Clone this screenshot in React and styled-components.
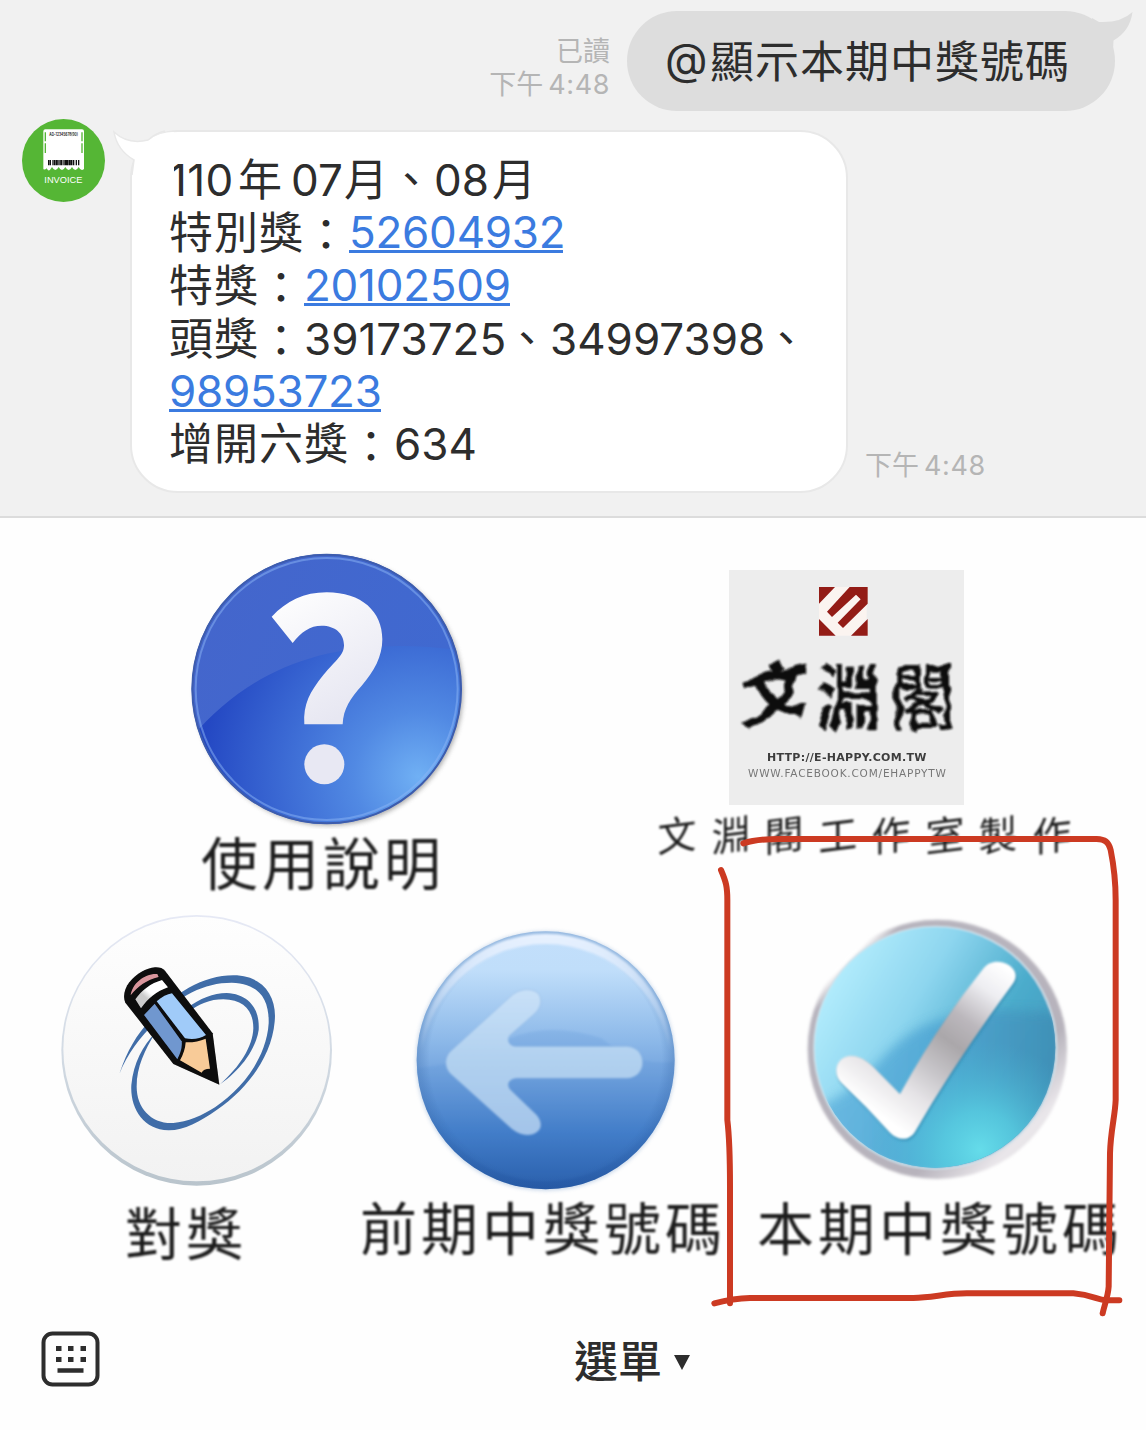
import React from "react";
import styled, { createGlobalStyle } from "styled-components";

const GlobalStyle = createGlobalStyle`
  *, *::before, *::after { box-sizing: border-box; }
  body { margin: 0; background: #fefefe; }
  svg { display: block; flex: none; }
`;

const Screen = styled.main`
  display: flex;
  flex-direction: column;
  width: 1146px;
  height: 1430px;
  overflow: hidden;
  background: #fefefe;
  color: #2d2d2d;
  font-family: Inter, "Noto Sans CJK TC", sans-serif;
`;

const Chat = styled.section`
  display: flex;
  flex-direction: column;
  gap: 8px;
  height: 518px;
  padding-top: 11px;
  background: #f1f1f1;
  border-bottom: 2px solid #dcdcdc;
`;

const SentRow = styled.div`
  display: flex;
  justify-content: flex-end;
  gap: 17px;
  padding-right: 31px;
`;

const ReceivedRow = styled.div`
  display: flex;
  align-items: flex-start;
  padding-left: 22px;
`;

const Meta = styled.div`
  display: flex;
  flex-direction: column;
  align-items: ${(p) => (p.$end ? "flex-end" : "flex-start")};
  padding: ${(p) => p.$top}px 0 0 ${(p) => p.$left || 0}px;
  font-size: 27px;
  line-height: 33px;
  color: #b5b5b5;
  white-space: nowrap;
`;

const Time = styled.span`
  display: flex;
  gap: 5px;
`;

const TimeDigits = styled.span`
  letter-spacing: 0.6px;
`;

const SentBubble = styled.div`
  position: relative;
  display: flex;
  align-items: center;
  width: 488px;
  height: 100px;
  padding-left: 38px;
  padding-bottom: 5px;
  border-radius: 50px;
  background: #dddddd;
  font-size: 44px;
  white-space: nowrap;
`;

const ReceivedBubble = styled.div`
  position: relative;
  width: 718px;
  height: 363px;
  margin: 11px 0 0 25px;
  padding: 22px 0 0 37px;
  border: 2px solid #e8e8e8;
  border-radius: 48px;
  background: #ffffff;
`;

const SentTail = styled.svg`
  position: absolute;
  right: -19px;
  top: 0;
`;

const ReceivedTail = styled.svg`
  position: absolute;
  left: -19px;
  top: -2px;
`;

const Line = styled.div`
  display: flex;
  height: 52.9px;
  align-items: center;
  font-size: 44px;
  line-height: 52.9px;
  white-space: nowrap;
`;

const Run = styled.span`
  flex: none;
  width: ${(p) => p.$w}px;
  letter-spacing: ${(p) => p.$ls || 0}px;
`;

const Colon = styled.span`
  flex: none;
  width: 45px;
  height: 50px;
  line-height: 55px;
`;

const NumberLink = styled.a`
  display: block;
  width: ${(p) => p.$w}px;
  height: 43px;
  margin-top: -3px;
  line-height: 44px;
  letter-spacing: -0.25px;
  color: #3b7be0;
  border-bottom: 3px solid #3b7be0;
`;

const Menu = styled.section`
  position: relative;
  height: 777px;
`;

const TopRow = styled.div`
  display: grid;
  grid-template-columns: 573px 1fr;
  height: 382px;
`;

const BottomRow = styled.div`
  display: grid;
  grid-template-columns: 350px 390px 1fr;
`;

const Tile = styled.div`
  display: flex;
  flex-direction: column;
  align-items: flex-start;
  padding: ${(p) => p.$top}px 0 0 ${(p) => p.$left}px;
`;

const Artwork = styled.div`
  margin-left: ${(p) => p.$shift || 0}px;
`;

const Label = styled.span`
  margin: ${(p) => p.$top}px 0 0 ${(p) => p.$shift || 0}px;
  font-size: 57px;
  line-height: 66px;
  letter-spacing: 4px;
  color: #1c1c1c;
  white-space: nowrap;
  filter: blur(0.8px);
`;

const Credit = styled(Label)`
  display: flex;
  font-size: 40px;
  line-height: 50px;
  letter-spacing: 0;
`;

const CreditGlyph = styled.span`
  width: 53.5px;
  transform: skewY(-7deg) scaleX(0.97);
  transform-origin: 20px 25px;
`;

const Annotation = styled.svg`
  position: absolute;
  left: 700px;
  top: 302px;
  pointer-events: none;
`;

const Footer = styled.footer`
  display: flex;
  align-items: center;
  height: 135px;
  padding: 0 0 7px 41px;
`;

const MenuButton = styled.button`
  display: flex;
  align-items: center;
  gap: 12px;
  margin-left: 474px;
  padding: 0;
  border: 0;
  background: none;
  color: #2d2d2d;
  font: 500 44px/60px "Noto Sans CJK TC", sans-serif;
`;

const Caret = styled.svg`
  margin-top: 6px;
`;

function Avatar() {
  return (
    <svg width="83" height="83" viewBox="66 57 249 249">
      <circle cx="190.500" cy="181.500" r="124.500" fill="#55b635" />
      <path d="M136 88H246Q252 88 252 94V207Q243 215 236 201Q226 219 216 201Q206 219 196 201Q186 219 176 201Q166 219 156 201Q146 219 140 205Q134 211 130 207V94Q130 88 136 88Z" fill="#fff" />
      <path d="M136 97V124M136 130V159M246 97V124M246 130V159" stroke="#55b635" strokeWidth="4" />
      <path d="M146 180V196M151 180V196M159 180V196M164 180V196M177 180V196M192 180V196M203 180V196M208 180V196M221 180V196M229 180V196M236 180V196" stroke="#111" strokeWidth="4" />
      <path d="M170 180V196M184 180V196M198 180V196M214 180V196" stroke="#111" strokeWidth="7" />
      <text x="148" y="107" textLength="86" lengthAdjust="spacingAndGlyphs" fontSize="14" fontWeight="600" fill="#111">AD-12345678(90)</text>
      <text x="133" y="248" textLength="114" lengthAdjust="spacingAndGlyphs" fontFamily="Liberation Sans" fontSize="29" fill="#fff">INVOICE</text>
    </svg>
  );
}

function QuestionIcon() {
  return (
    <svg width="290" height="283" viewBox="30 18 870 849">
      <defs>
        <radialGradient id="qBase" gradientUnits="userSpaceOnUse" cx="745" cy="710" r="650">
          <stop offset="0" stopColor="#70b0f4" />
          <stop offset=".3" stopColor="#5189e3" />
          <stop offset=".65" stopColor="#3a68d3" />
          <stop offset="1" stopColor="#2448c3" />
        </radialGradient>
        <linearGradient id="qMark" x1="0" y1="0" x2=".5" y2="1">
          <stop offset="0" stopColor="#fff" />
          <stop offset="1" stopColor="#e7e7f2" />
        </linearGradient>
        <linearGradient id="qGloss" x1="0" y1="0" x2="1" y2=".3">
          <stop offset="0" stopColor="#4565cb" />
          <stop offset="1" stopColor="#4069d0" />
        </linearGradient>
        <clipPath id="qClip"><circle cx="470" cy="447" r="403" /></clipPath>
        <filter id="qShadow" x="-10%" y="-10%" width="120%" height="120%"><feGaussianBlur stdDeviation="8" /></filter>
        <filter id="qSoft"><feGaussianBlur stdDeviation="2.200" /></filter>
      </defs>
      <circle cx="477" cy="454" r="402" fill="#777" opacity=".65" filter="url(#qShadow)" />
      <circle cx="470" cy="447" r="405" fill="url(#qBase)" />
      <path clipPath="url(#qClip)" d="M50 610C220 400 470 270 900 335V0H0Z" fill="url(#qGloss)" />
      <g filter="url(#qSoft)">
        <circle cx="470" cy="447" r="393" fill="none" stroke="#8bb5f5" strokeWidth="6" opacity=".5" />
        <circle cx="470" cy="447" r="403" fill="none" stroke="#3c5cad" strokeWidth="6" />
        <path d="M305 230C350 183 402 157 470 157C575 157 637 215 637 298C637 350 612 395 575 437C542 474 520 505 518 553H403C399 492 420 455 460 405C500 358 522 345 522 315C522 280 495 257 455 257C420 257 395 275 368 309Z" fill="url(#qMark)" />
        <circle cx="463" cy="673" r="60" fill="#e8e8f3" />
      </g>
    </svg>
  );
}

function StudioLogo() {
  return (
    <svg width="235" height="235" viewBox="0 0 235 235">
      <defs>
        <filter id="brush" x="-10%" y="-10%" width="120%" height="120%">
          <feTurbulence type="fractalNoise" baseFrequency="0.045 0.06" numOctaves="2" seed="8" result="n" />
          <feDisplacementMap in="SourceGraphic" in2="n" scale="11" xChannelSelector="R" yChannelSelector="G" />
          <feGaussianBlur stdDeviation=".8" />
        </filter>
        <filter id="soft"><feGaussianBlur stdDeviation=".5" /></filter>
      </defs>
      <rect width="235" height="235" fill="#ededed" />
      <g transform="translate(90 17) scale(.3333)" filter="url(#soft)">
        <path d="M48 0H92L143 48V95L96 146H50L0 96V50Z" fill="#fbf4f0" />
        <path d="M0 0H48L0 50ZM0 96L50 146H0ZM146 96V146H96Z" fill="#931b18" />
        <path d="M92 0H146V50L72 123L56 107L125 37L111 23L39 90L24 74Z" fill="#931b18" />
      </g>
      <g filter="url(#brush)" fill="#0b0b0b" fontFamily="Noto Sans CJK TC" fontSize="70">
        <text transform="translate(12 156) skewY(-14) scale(.98 .95)" x="0" y="0" fontWeight="900">文</text>
        <text transform="translate(87 154) scale(.92 1.02)" x="0" y="0" fontWeight="700">淵</text>
        <text transform="translate(161 154) scale(.93 1.02)" x="0" y="0" fontWeight="500">閣</text>
      </g>
      <g filter="url(#soft)" fontFamily="DejaVu Sans">
        <text x="38" y="191" fontSize="11" fontWeight="700" fill="#3e3e3e" letterSpacing=".3">HTTP://E-HAPPY.COM.TW</text>
        <text x="19" y="207" fontSize="10.500" fill="#777" letterSpacing=".8">WWW.FACEBOOK.COM/EHAPPYTW</text>
      </g>
    </svg>
  );
}

function PencilIcon() {
  return (
    <svg width="283" height="283" viewBox="45 33 849 849">
      <defs>
        <linearGradient id="pBase" x1="0" y1="0" x2="0" y2="1">
          <stop offset="0" stopColor="#fefefe" />
          <stop offset="1" stopColor="#f2f2f2" />
        </linearGradient>
        <linearGradient id="pRim" x1="0" y1="0" x2="0" y2="1">
          <stop offset="0" stopColor="#e6e9f5" />
          <stop offset=".5" stopColor="#d3dbe4" />
          <stop offset="1" stopColor="#b9c4cc" />
        </linearGradient>
        <linearGradient id="pBand" x1="0" y1="1" x2="1" y2="0">
          <stop offset=".35" stopColor="#ccc" />
          <stop offset=".5" stopColor="#fff" />
        </linearGradient>
        <filter id="pSoft"><feGaussianBlur stdDeviation="2" /></filter>
      </defs>
      <circle cx="470" cy="451" r="406" fill="url(#pRim)" />
      <ellipse cx="470" cy="447" rx="400" ry="397" fill="url(#pBase)" />
      <g filter="url(#pSoft)">
        <g fill="#416da8">
          <path d="M238 522C262 450 290 405 330 360C400 280 490 226 580 226C670 226 712 290 704 365C695 470 620 570 530 630C480 665 430 692 385 691C310 688 270 625 274 555C280 490 310 435 345 400C315 450 290 500 290 560C290 625 335 672 400 669C440 667 490 645 525 622C610 565 680 470 686 370C688 295 655 250 575 248C490 248 410 290 345 368C300 412 262 460 238 522Z" />
          <path d="M440 325C480 295 520 279 560 279C625 282 660 325 656 390C647 450 600 512 540 553C600 500 638 440 640 385C640 330 610 299 550 298C510 298 475 312 445 337Z" />
        </g>
        <path d="M345 202Q365 201 375 212L518 400L538 554L400 492L256 308C248 290 253 266 268 247C290 220 318 205 345 202Z" fill="#080808" />
        <path d="M272 286C276 250 315 219 352 222L356 231C320 240 294 258 272 286Z" fill="#d9969c" />
        <path d="M286 298C306 270 332 250 366 240L384 262C350 274 324 295 303 325Z" fill="url(#pBand)" />
        <path d="M350 304C366 290 381 283 396 280L498 405C480 417 458 420 435 415Z" fill="#a0cbf9" />
        <path d="M312 345L344 311L425 424C428 442 420 462 412 478Z" fill="#7097cf" />
        <path d="M437 427Q470 428 497 416L510 506Q490 506 485 518L420 481Q435 455 437 427Z" fill="#f8cb98" />
      </g>
    </svg>
  );
}

function BackIcon() {
  return (
    <svg width="272" height="272" viewBox="180 45 816 816">
      <defs>
        <linearGradient id="bBase" x1="0" y1="0" x2="0" y2="1">
          <stop offset="0" stopColor="#c3dffb" />
          <stop offset=".15" stopColor="#c0defa" />
          <stop offset=".42" stopColor="#8db9e9" />
          <stop offset=".54" stopColor="#76a6df" />
          <stop offset=".78" stopColor="#417cc8" />
          <stop offset="1" stopColor="#2458a6" />
        </linearGradient>
        <radialGradient id="bEdge">
          <stop offset=".9" stopColor="#2b5b9d" stopOpacity="0" />
          <stop offset="1" stopColor="#2b5b9d" stopOpacity=".28" />
        </radialGradient>
        <linearGradient id="bShine" x1="0" y1="0" x2="0" y2="1">
          <stop offset="0" stopColor="#e9f2ff" />
          <stop offset=".45" stopColor="#e2edff" stopOpacity="0" />
        </linearGradient>
        <linearGradient id="bArrow" x1="0" y1="0" x2="0" y2="1">
          <stop offset="0" stopColor="#c9e1f8" />
          <stop offset=".5" stopColor="#b0d0ef" />
          <stop offset="1" stopColor="#a3c4e9" />
        </linearGradient>
        <filter id="bSoft"><feGaussianBlur stdDeviation="6" /></filter>
        <filter id="bFine"><feGaussianBlur stdDeviation="2.500" /></filter>
      </defs>
      <circle cx="587" cy="453" r="388" fill="#608bc0" opacity=".4" filter="url(#bSoft)" />
      <circle cx="587" cy="451" r="387" fill="url(#bBase)" />
      <path d="M202 475Q380 455 480 385Q600 335 755 385Q850 470 972 455A387 387 0 0 1 202 475Z" fill="#4b87d0" opacity=".16" filter="url(#bFine)" />
      <circle cx="587" cy="451" r="387" fill="url(#bEdge)" />
      <path fillRule="evenodd" filter="url(#bFine)" d="M208 451A379 379 0 1 1 966 451A379 379 0 0 1 208 451ZM214 475A373 373 0 1 0 960 475A373 373 0 0 0 214 475Z" fill="url(#bShine)" />
      <path filter="url(#bFine)" d="M300 425L480 261C512 230 555 235 568 255C578 275 570 295 555 310L480 376C468 390 478 409 500 409H830C894 412 894 503 830 505H500C475 507 468 525 482 540L560 615C580 640 575 662 550 672C525 680 500 670 480 652L300 490C283 470 283 445 300 425Z" fill="url(#bArrow)" stroke="#6d9fd8" strokeOpacity=".35" strokeWidth="3" />
    </svg>
  );
}

function CheckIcon() {
  return (
    <svg width="278" height="280" viewBox="300 270 834 840">
      <defs>
        <linearGradient id="cRim" x1="0" y1="0" x2="1" y2="1">
          <stop offset="0" stopColor="#fff" />
          <stop offset=".155" stopColor="#fff" />
          <stop offset=".19" stopColor="#b7b4bd" />
          <stop offset=".7" stopColor="#b7b3bc" />
          <stop offset=".83" stopColor="#e9e6ea" />
          <stop offset="1" stopColor="#ddd" />
        </linearGradient>
        <linearGradient id="cBase" x1="0" y1=".2" x2="1" y2=".8">
          <stop offset="0" stopColor="#b9f0ff" />
          <stop offset=".35" stopColor="#8ed6ef" />
          <stop offset=".65" stopColor="#4caccc" />
          <stop offset="1" stopColor="#3d93b9" />
        </linearGradient>
        <linearGradient id="cLower" x1="0" y1="0" x2="1" y2="0">
          <stop offset="0" stopColor="#64b5df" />
          <stop offset=".45" stopColor="#51a7d5" />
          <stop offset="1" stopColor="#3e8db3" />
        </linearGradient>
        <radialGradient id="cGlow" gradientUnits="userSpaceOnUse" cx="840" cy="990" r="330">
          <stop offset="0" stopColor="#65dcea" />
          <stop offset=".35" stopColor="#58cfe2" stopOpacity=".8" />
          <stop offset="1" stopColor="#48b2d2" stopOpacity="0" />
        </radialGradient>
        <linearGradient id="cMark" gradientUnits="userSpaceOnUse" x1="900" y1="430" x2="560" y2="900">
          <stop offset="0" stopColor="#fff" />
          <stop offset=".15" stopColor="#eeeef2" />
          <stop offset=".34" stopColor="#bbb7bc" />
          <stop offset=".48" stopColor="#aaa7aa" />
          <stop offset=".66" stopColor="#c8c6ca" />
          <stop offset=".8" stopColor="#e4e2e5" />
          <stop offset="1" stopColor="#fff" />
        </linearGradient>
        <clipPath id="cClip"><circle cx="705" cy="682" r="361" /></clipPath>
        <filter id="cSoft" x="-10%" y="-10%" width="120%" height="120%"><feGaussianBlur stdDeviation="5" /></filter>
        <filter id="cFine"><feGaussianBlur stdDeviation="2.500" /></filter>
        <filter id="cBlend"><feGaussianBlur stdDeviation="16" /></filter>
      </defs>
      <circle cx="712" cy="688" r="389" fill="url(#cRim)" filter="url(#cSoft)" />
      <g filter="url(#cFine)">
        <circle cx="706" cy="683" r="366" fill="#d3e3ec" />
        <circle cx="705" cy="682" r="361" fill="url(#cBase)" />
      </g>
      <g clipPath="url(#cClip)">
        <path d="M360 860C550 770 550 640 750 592C870 560 980 575 1100 580V1100H320Z" fill="url(#cLower)" filter="url(#cBlend)" opacity=".85" />
        <circle cx="840" cy="990" r="330" fill="url(#cGlow)" />
      </g>
      <path transform="translate(3 6)" d="M445 708C475 703 498 720 520 740L600 822Q710 620 848 448C868 419 905 420 930 437C953 455 950 475 938 492Q770 720 645 935C628 963 595 963 570 938Q500 860 425 790C397 765 405 715 445 708Z" fill="#287fa8" opacity=".6" filter="url(#cSoft)" />
      <path filter="url(#cFine)" d="M445 708C475 703 498 720 520 740L600 822Q710 620 848 448C868 419 905 420 930 437C953 455 950 475 938 492Q770 720 645 935C628 963 595 963 570 938Q500 860 425 790C397 765 405 715 445 708Z" fill="url(#cMark)" />
    </svg>
  );
}

function KeyboardIcon() {
  return (
    <svg width="59" height="56" viewBox="0 0 59 56" fill="none" stroke="#2d2d2d">
      <rect x="2.500" y="2.500" width="54" height="51" rx="9" strokeWidth="4" />
      <path d="M15 17.500H20.500M27 17.500H32.500M39.500 17.500H45M15 28.500H20.500M27 28.500H32.500M39.500 28.500H45" strokeWidth="5" />
      <path d="M16.500 39.500H42.500" strokeWidth="4.500" />
    </svg>
  );
}

export default function App() {
  return (
    <Screen>
      <GlobalStyle />
      <Chat>
        <SentRow>
          <Meta $end $top={24}>
            <span>已讀</span>
            <Time>下午<TimeDigits>4:48</TimeDigits></Time>
          </Meta>
          <SentBubble>
            <Run $w={45}>@</Run>
            <Run $w={360} $ls={1}>顯示本期中獎號碼</Run>
            <SentTail width="42" height="48" viewBox="0 0 42 48">
              <path d="M0 7L7 11Q29 12 40.500 1Q38 20 21.500 29.500L21 40L0 40Z" fill="#ddd" />
            </SentTail>
          </SentBubble>
        </SentRow>
        <ReceivedRow>
          <Avatar />
          <ReceivedBubble>
            <Line>
              <Run $w={69} $ls={0.4}>110</Run>
              <Run $w={53}>年</Run>
              <Run $w={53}>07</Run>
              <Run $w={90} $ls={1}>月、</Run>
              <Run $w={58}>08</Run>
              <Run $w={45}>月</Run>
            </Line>
            <Line>
              <Run $w={135} $ls={1}>特別獎</Run>
              <Colon>：</Colon>
              <NumberLink $w={214}>52604932</NumberLink>
            </Line>
            <Line>
              <Run $w={90} $ls={1}>特獎</Run>
              <Colon>：</Colon>
              <NumberLink $w={206}>20102509</NumberLink>
            </Line>
            <Line>
              <Run $w={90} $ls={1}>頭獎</Run>
              <Colon>：</Colon>
              <Run $w={201}>39173725</Run>
              <Run $w={45}>、</Run>
              <Run $w={214}>34997398</Run>
              <Run $w={45}>、</Run>
            </Line>
            <Line>
              <NumberLink $w={212}>98953723</NumberLink>
            </Line>
            <Line>
              <Run $w={180} $ls={1}>增開六獎</Run>
              <Colon>：</Colon>
              <Run $w={82}>634</Run>
            </Line>
            <ReceivedTail width="62" height="52" viewBox="0 0 62 52">
              <path d="M61 2Q46 2 36 10Q15 15 1 2Q4 20 21 30L19 50H61Z" fill="#fff" />
              <path d="M52 1Q43 3 35 10Q15 15 1 2Q4 20 21 30L19 45" fill="none" stroke="#e8e8e8" strokeWidth="1.500" />
            </ReceivedTail>
          </ReceivedBubble>
          <Meta $top={330} $left={17}>
            <Time>下午<TimeDigits>4:48</TimeDigits></Time>
          </Meta>
        </ReceivedRow>
      </Chat>
      <Menu>
        <TopRow>
          <Tile $top={28} $left={180}>
            <QuestionIcon />
            <Label $top={3} $shift={21}>使用說明</Label>
          </Tile>
          <Tile $top={52} $left={84}>
            <Artwork $shift={72}><StudioLogo /></Artwork>
            <Credit $top={6}>
              {[..."文淵閣工作室製作"].map((glyph, i) => <CreditGlyph key={i}>{glyph}</CreditGlyph>)}
            </Credit>
          </Tile>
        </TopRow>
        <BottomRow>
          <Tile $top={11} $left={55}>
            <PencilIcon />
            <Label $top={8} $shift={70}>對獎</Label>
          </Tile>
          <Tile $top={25} $left={10}>
            <Artwork $shift={50}><BackIcon /></Artwork>
            <Label $top={0}>前期中獎號碼</Label>
          </Tile>
          <Tile $top={10} $left={17}>
            <Artwork $shift={43}><CheckIcon /></Artwork>
            <Label $top={7}>本期中獎號碼</Label>
          </Tile>
        </BottomRow>
        <Annotation width="446" height="500" viewBox="0 0 1338 1500" fill="none" stroke="#cc3a22" strokeWidth="18" strokeLinecap="round" strokeLinejoin="round">
          <path d="M130 70C160 60 190 57 240 57H1190C1215 58 1225 65 1232 90C1242 140 1247 180 1247 240V840C1245 890 1232 930 1230 1000L1226 1400C1224 1430 1212 1460 1208 1480" />
          <path d="M63 150C78 185 82 200 82 240V900C88 950 90 1000 90 1100V1450" />
          <path d="M43 1450C90 1438 110 1435 150 1434H640C700 1432 740 1420 800 1420H1120C1180 1425 1190 1440 1220 1441H1258" />
        </Annotation>
      </Menu>
      <Footer>
        <KeyboardIcon />
        <MenuButton>
          選單
          <Caret width="16" height="15" viewBox="0 0 16 15"><path d="M0 0H16L8 15Z" fill="#2d2d2d" /></Caret>
        </MenuButton>
      </Footer>
    </Screen>
  );
}
